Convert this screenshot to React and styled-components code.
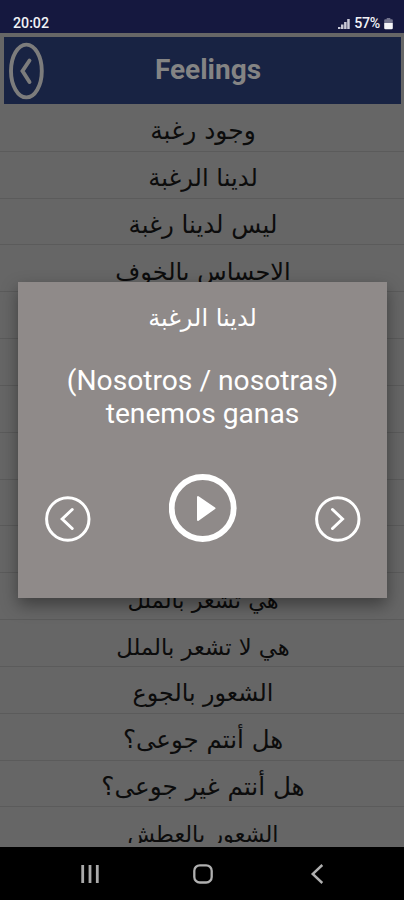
import React from 'react';
import styled, { createGlobalStyle } from 'styled-components';

const GlobalStyle = createGlobalStyle`
  * {
    box-sizing: border-box;
  }
  body {
    margin: 0;
    background: #000;
  }
`;

const Screen = styled.div`
  position: relative;
  display: flex;
  flex-direction: column;
  width: 404px;
  height: 900px;
  overflow: hidden;
  background: #666;
  font-family: Roboto, 'DejaVu Sans', sans-serif;
`;

const StatusBar = styled.div`
  display: flex;
  flex: none;
  align-items: flex-start;
  justify-content: space-between;
  height: 33px;
  padding: 15px 11px 0 13px;
  background: #15183f;
  color: #f2f2f6;
  font-size: 14.2px;
  font-weight: 500;
  line-height: 17px;
`;

const StatusIcons = styled.div`
  display: flex;
  align-items: center;
  gap: 4px;
  letter-spacing: -0.3px;
`;

const Header = styled.header`
  display: grid;
  flex: none;
  grid-template-columns: 46px 1fr 35px;
  align-items: center;
  height: 67px;
  margin: 4px 3px 0 4px;
  background: #182343;
`;

const BackButton = styled.button`
  display: flex;
  padding: 0 0 0 5px;
  border: 0;
  background: none;
`;

const Title = styled.h1`
  margin: 0;
  padding-bottom: 1px;
  color: #848484;
  font-size: 28px;
  font-weight: 700;
  line-height: 64px;
  text-align: center;
`;

const List = styled.ul`
  flex: none;
  height: 739px;
  margin: 0;
  padding: 1px 0 0;
  overflow: hidden;
  list-style: none;
`;

const Row = styled.li`
  display: flex;
  align-items: center;
  justify-content: center;
  height: 46.83px;
  padding: 7px 0 0 2px;
  border-bottom: 1px solid #5b5b5b;
  color: #0c0c0c;
`;

const Arabic = styled.span`
  font-family: 'DejaVu Sans', sans-serif;
  font-size: ${({ $size }) => $size || 24}px;
  line-height: 30px;
  white-space: nowrap;
`;

const Dialog = styled.section`
  position: absolute;
  top: 282px;
  left: 18px;
  display: flex;
  flex-direction: column;
  align-items: center;
  width: 369px;
  height: 316px;
  padding-top: 21px;
  background: #8f8a89;
  box-shadow: 0 7px 16px rgba(0, 0, 0, 0.4);
  color: #fff;
`;

const Translation = styled.p`
  width: 300px;
  margin: 31px 0 0;
  font-size: 28.2px;
  line-height: 33px;
  text-align: center;
`;

const Controls = styled.div`
  display: flex;
  align-items: flex-end;
  justify-content: space-between;
  width: 316px;
  margin-top: 44px;
`;

const ControlButton = styled.button`
  display: flex;
  padding: 0;
  border: 0;
  background: none;
`;

const NavBar = styled.nav`
  display: flex;
  flex: 1;
  align-items: center;
  gap: 92px;
  margin-top: 4px;
  padding: 1px 0 0 79px;
  background: #000;
`;

const SignalIcon = () => (
  <svg width="12" height="12" viewBox="0 0 12 12" fill="#c9c9d6">
    <path d="M0 9H2.5V11H0zM3 6.5h2.5V11H3zM6.1 4h2.5v7H6.1zM9.2 1h2.5v10H9.2z" />
  </svg>
);

const BatteryIcon = () => (
  <svg width="9" height="13" viewBox="0 0 9 13">
    <path d="M2.7 1h3.6v1.3h1.5q1 0 1 1V6H.2V3.3q0-1 1-1h1.5z" fill="#74758e" />
    <path d="M.2 6h8.6v5q0 1.3-1.3 1.3h-6Q.2 12.3.2 11z" fill="#f5f5f8" />
  </svg>
);

const BackIcon = () => (
  <svg width="35" height="58" viewBox="0 0 35 58" fill="none" stroke="#7c7c7c">
    <ellipse cx="17.4" cy="29" rx="15.4" ry="26.4" strokeWidth="3.9" />
    <path d="M20.5 18.5 13.5 29l7 11" strokeWidth="3.9" strokeLinecap="round" />
  </svg>
);

const ArrowIcon = ({ next }) => (
  <svg width="46" height="46" viewBox="0 0 46 46" fill="none" stroke="#fff">
    <circle cx="22.8" cy="23" r="21.2" strokeWidth="3" />
    <path
      d={next ? 'M17.5 13.5 27.5 23l-10 9.5' : 'M27.2 13.5 17.2 23l10 9.5'}
      strokeWidth="3"
      strokeLinecap="round"
    />
  </svg>
);

const PlayIcon = () => (
  <svg width="68" height="68" viewBox="0 0 68 68">
    <circle cx="33.7" cy="34" r="31" fill="none" stroke="#fff" strokeWidth="5.8" />
    <path d="M29 23v23l16.5-11.7z" fill="#fff" stroke="#fff" strokeWidth="2" strokeLinejoin="round" />
  </svg>
);

const RecentsIcon = () => (
  <svg width="22" height="20" viewBox="0 0 22 20" fill="#aaa">
    <path d="M2.3 1h2.8v18H2.3zM9.6 1h2.8v18H9.6zM16.9 1h2.8v18h-2.8z" />
  </svg>
);

const HomeIcon = () => (
  <svg width="20" height="20" viewBox="0 0 20 20" fill="none" stroke="#b0b0b0" strokeWidth="2.3">
    <rect x="1.3" y="1.3" width="17.4" height="17.2" rx="5.5" />
  </svg>
);

const NavBackIcon = () => (
  <svg width="22" height="20" viewBox="0 0 22 20" fill="none" stroke="#b0b0b0" strokeWidth="2.4">
    <path d="M17.3 1 7.7 10l9.6 9" />
  </svg>
);

// empty rows are the ones fully covered by the dialog
const phrases = [
  { text: 'وجود رغبة', size: 25 },
  { text: 'لدينا الرغبة', size: 24.2 },
  { text: 'ليس لدينا رغبة', size: 24.5 },
  { text: 'الاحساس بالخوف', size: 24.1 },
  {},
  {},
  {},
  {},
  {},
  {},
  { text: 'هي تشعر بالملل', size: 22.4 },
  { text: 'هي لا تشعر بالملل', size: 22.7 },
  { text: 'الشعور بالجوع', size: 23.8 },
  { text: 'هل أنتم جوعى؟', size: 24.5 },
  { text: 'هل أنتم غير جوعى؟', size: 24.7 },
  { text: 'الشعور بالعطش', size: 22.4 },
];

const App = () => (
  <>
    <GlobalStyle />
    <Screen>
      <StatusBar>
        <span>20:02</span>
        <StatusIcons>
          <SignalIcon />
          57%
          <BatteryIcon />
        </StatusIcons>
      </StatusBar>
      <Header>
        <BackButton aria-label="Back">
          <BackIcon />
        </BackButton>
        <Title>Feelings</Title>
      </Header>
      <List dir="rtl">
        {phrases.map(({ text, size }, index) => (
          <Row key={index}>{text ? <Arabic $size={size}>{text}</Arabic> : null}</Row>
        ))}
      </List>
      <NavBar>
        <RecentsIcon />
        <HomeIcon />
        <NavBackIcon />
      </NavBar>
      <Dialog>
        <Arabic dir="rtl">لدينا الرغبة</Arabic>
        <Translation>(Nosotros / nosotras) tenemos ganas</Translation>
        <Controls>
          <ControlButton aria-label="Previous">
            <ArrowIcon />
          </ControlButton>
          <ControlButton aria-label="Play">
            <PlayIcon />
          </ControlButton>
          <ControlButton aria-label="Next">
            <ArrowIcon next />
          </ControlButton>
        </Controls>
      </Dialog>
    </Screen>
  </>
);

export default App;
